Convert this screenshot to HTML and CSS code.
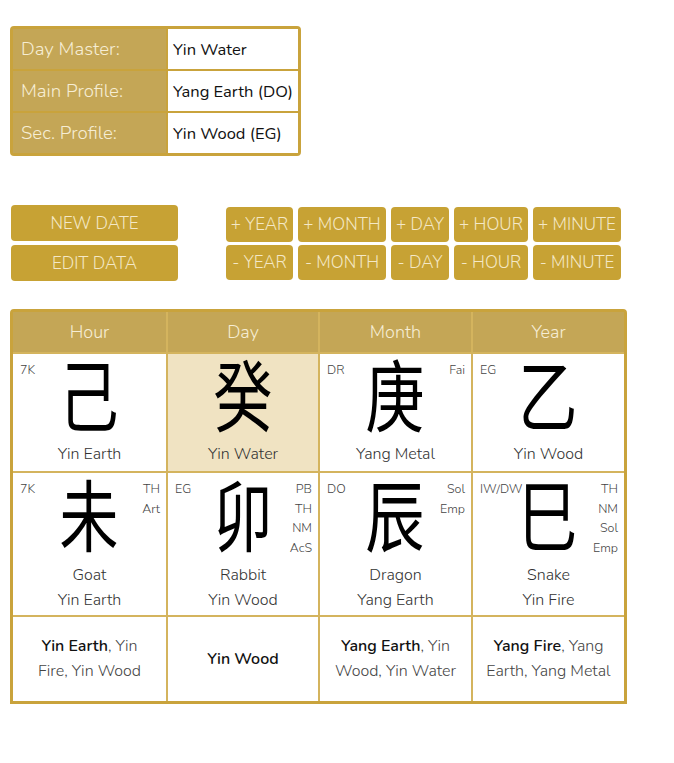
FILE: index.html
```html
<!DOCTYPE html>
<html>
<head>
<meta charset="utf-8">
<link rel="stylesheet" href="styles.css">
</head>
<body>
<div class="page">
  <div class="profile">
    <div class="prow"><div class="plabel">Day Master:</div><div class="pval">Yin Water</div></div>
    <div class="prow"><div class="plabel">Main Profile:</div><div class="pval">Yang Earth (DO)</div></div>
    <div class="prow"><div class="plabel">Sec. Profile:</div><div class="pval">Yin Wood (EG)</div></div>
  </div>

  <div class="controls">
    <div class="leftbtns">
      <div class="btn wide">NEW DATE</div>
      <div class="btn wide">EDIT DATA</div>
    </div>
    <div class="stepbtns">
      <div class="btn">+ YEAR</div>
      <div class="btn">+ MONTH</div>
      <div class="btn">+ DAY</div>
      <div class="btn">+ HOUR</div>
      <div class="btn">+ MINUTE</div>
      <div class="btn">- YEAR</div>
      <div class="btn">- MONTH</div>
      <div class="btn">- DAY</div>
      <div class="btn">- HOUR</div>
      <div class="btn">- MINUTE</div>
    </div>
  </div>

  <div class="chart">
    <div class="head">Hour</div>
    <div class="head">Day</div>
    <div class="head">Month</div>
    <div class="head">Year</div>

    <div class="cell stem">
      <div class="tl">7K</div>
      <div class="glyph">己</div>
      <div class="name">Yin Earth</div>
    </div>
    <div class="cell stem daymaster">
      <div class="glyph">癸</div>
      <div class="name">Yin Water</div>
    </div>
    <div class="cell stem">
      <div class="tl">DR</div>
      <div class="tr">Fai</div>
      <div class="glyph">庚</div>
      <div class="name">Yang Metal</div>
    </div>
    <div class="cell stem">
      <div class="tl">EG</div>
      <div class="glyph">乙</div>
      <div class="name">Yin Wood</div>
    </div>

    <div class="cell branch">
      <div class="tl">7K</div>
      <div class="tr">TH<br>Art</div>
      <div class="glyph">未</div>
      <div class="name">Goat<br>Yin Earth</div>
    </div>
    <div class="cell branch">
      <div class="tl">EG</div>
      <div class="tr">PB<br>TH<br>NM<br>AcS</div>
      <div class="glyph">卯</div>
      <div class="name">Rabbit<br>Yin Wood</div>
    </div>
    <div class="cell branch">
      <div class="tl">DO</div>
      <div class="tr">Sol<br>Emp</div>
      <div class="glyph">辰</div>
      <div class="name">Dragon<br>Yang Earth</div>
    </div>
    <div class="cell branch">
      <div class="tl">IW/DW</div>
      <div class="tr">TH<br>NM<br>Sol<br>Emp</div>
      <div class="glyph">巳</div>
      <div class="name">Snake<br>Yin Fire</div>
    </div>

    <div class="cell hidden"><p><b>Yin Earth</b>, Yin Fire, Yin Wood</p></div>
    <div class="cell hidden"><p><b>Yin Wood</b></p></div>
    <div class="cell hidden"><p><b>Yang Earth</b>, Yin Wood, Yin Water</p></div>
    <div class="cell hidden"><p><b>Yang Fire</b>, Yang Earth, Yang Metal</p></div>
  </div>
</div>
</body>
</html>
```

FILE: styles.css
```css
html, body {
  margin: 0;
  padding: 0;
  background: #ffffff;
}

body {
  font-family: "Nunito", "Lato", "Open Sans", sans-serif;
  font-weight: 300;
  color: #333333;
}

.page {
  padding: 26px 0 0 10px;
}

/* profile table */
.profile {
  width: 285px;
  border: 3px solid #c9a33c;
  border-radius: 4px;
  background: #c9a33c;
  display: flex;
  flex-direction: column;
  gap: 2px;
}

.prow {
  display: flex;
  gap: 2px;
  height: 40px;
}

.plabel {
  width: 153px;
  background: #c4a656;
  color: #f6edd4;
  font-size: 18.7px;
  display: flex;
  align-items: center;
  padding-left: 8px;
  box-sizing: border-box;
}

.pval {
  flex: 1;
  background: #ffffff;
  color: #111111;
  font-size: 16.5px;
  font-weight: 400;
  display: flex;
  align-items: center;
  padding-left: 5px;
}

/* buttons */
.controls {
  display: flex;
  margin-top: 51px;
  gap: 48px;
  align-items: flex-start;
}

.leftbtns {
  display: flex;
  flex-direction: column;
  gap: 4px;
  margin-left: 1px;
  margin-top: -2px;
}

.btn {
  background: #c7a234;
  color: #f4e8c6;
  border-radius: 4px;
  font-size: 17px;
  display: flex;
  align-items: center;
  justify-content: center;
  height: 35px;
  box-sizing: border-box;
  white-space: nowrap;
}

.btn.wide {
  width: 167px;
  height: 36px;
}

.stepbtns {
  display: grid;
  grid-template-columns: 67px 88px 58px 74px 88px;
  gap: 3px 5px;
}

/* chart */
.chart {
  margin-top: 28px;
  width: 611px;
  border: 3px solid #c9a33c;
  border-radius: 4px 4px 0 0;
  background: #d4b45e;
  display: grid;
  grid-template-columns: 153px 150px 151px 151px;
  grid-template-rows: 40px 117px 142px 84px;
  gap: 2px;
}

.head {
  background: #c4a656;
  color: #f6edd4;
  font-size: 18px;
  display: flex;
  align-items: center;
  justify-content: center;
}

.cell {
  background: #ffffff;
  position: relative;
  display: flex;
  flex-direction: column;
  align-items: center;
}

.cell.daymaster {
  background: #f0e3c2;
}

.tl, .tr {
  position: absolute;
  top: 6px;
  font-size: 12.5px;
  line-height: 19.5px;
  color: #444444;
}

.tl { left: 7px; }
.tr { right: 6px; text-align: right; }

.glyph {
  font-family: "Noto Sans CJK SC", "Noto Sans CJK JP", sans-serif;
  font-weight: 400;
  font-size: 78px;
  line-height: 78px;
  height: 78px;
  color: #000000;
  transform: scaleX(0.76);
}

.stem .glyph {
  margin-top: -1px;
}

.branch .glyph {
  margin-top: 0;
}

.name {
  font-size: 16px;
  line-height: 25px;
  text-align: center;
  color: #333333;
}

.stem .name {
  margin-top: 11px;
}

.branch .name {
  margin-top: 12px;
}

.cell.hidden {
  justify-content: center;
}

.hidden p {
  margin: 0;
  font-size: 16px;
  line-height: 25px;
  text-align: center;
  color: #444444;
  padding: 0 13px;
}

.hidden b {
  font-weight: 600;
  color: #111111;
}
```
